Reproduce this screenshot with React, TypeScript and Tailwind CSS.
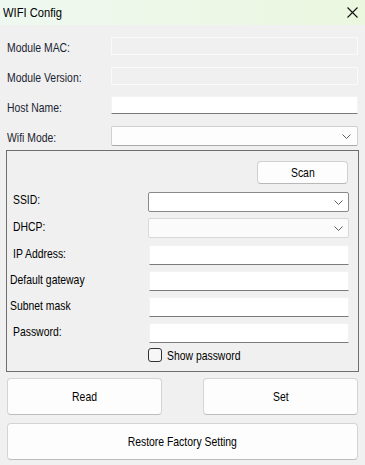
import React from "react";

const T = ({ children, className = "" }: { children: React.ReactNode; className?: string }) => (
  <span className={`block whitespace-nowrap origin-left scale-x-[0.8] text-[13px] leading-[15px] ${className}`}>{children}</span>
);

const C = ({ children }: { children: React.ReactNode }) => (
  <span className="block whitespace-nowrap scale-x-[0.8] text-[13px] leading-[15px] text-black">{children}</span>
);

const Chevron = () => (
  <svg width="9" height="5" viewBox="0 0 9 5" className="block">
    <path d="M0.5 0.5 L4.5 4.5 L8.5 0.5" fill="none" stroke="#606060" strokeWidth="1" />
  </svg>
);

export default function App() {
  return (
    <div className="w-[365px] h-[465px] bg-[#f0f0f0] text-black overflow-hidden" style={{ fontFamily: '"Liberation Sans", Arial, sans-serif' }}>
      {/* Title bar */}
      <div className="h-[25px] flex items-center justify-between pl-[3px] pr-[7px] bg-gradient-to-r from-[#eef8f0] to-[#ebf7df]">
        <span className="block whitespace-nowrap origin-left scale-x-[0.86] text-[13px] leading-[15px]">WIFI Config</span>
        <svg width="11" height="11" viewBox="0 0 11 11" className="block">
          <path d="M0.5 0.5 L10.5 10.5 M10.5 0.5 L0.5 10.5" stroke="#111" strokeWidth="1.1" />
        </svg>
      </div>

      {/* Top section */}
      <div className="pl-[7px] pt-[12px]">
        <div className="flex items-start h-[18px]">
          <div className="flex w-[104px] mt-[3px]"><T className="text-[#1b2430]">Module MAC:</T></div>
          <div className="w-[247px] h-[18px] border border-[#fafafa] bg-[#f0f0f0]" />
        </div>
        <div className="flex items-start h-[18px] mt-[12px]">
          <div className="flex w-[104px] mt-[3px]"><T className="text-[#1b2430]">Module Version:</T></div>
          <div className="w-[247px] h-[18px] border border-[#fafafa] bg-[#f0f0f0]" />
        </div>
        <div className="flex items-start h-[18px] mt-[11px]">
          <div className="flex w-[104px] mt-[4px]"><T className="text-[#1b2430]">Host Name:</T></div>
          <div className="w-[247px] h-[18px] bg-white border border-[#f4f4f4] border-b-[#7a7a7a]" />
        </div>
        <div className="flex items-start h-[20px] mt-[12px]">
          <div className="flex w-[104px] mt-[4px]"><T className="text-[#1b2430]">Wifi Mode:</T></div>
          <div className="w-[247px] h-[20px] bg-[#fdfdfd] border border-[#d0d0d0] border-b-[#a8a8a8] rounded-[2px] flex items-center justify-end pr-[6px]">
            <Chevron />
          </div>
        </div>
      </div>

      {/* Group box */}
      <div className="ml-[6px] mt-[4px] w-[353px] h-[222px] border border-[#6e6e6e]">
        <div className="flex justify-end pr-[10px] pt-[10px]">
          <div className="w-[91px] h-[23px] bg-[#fdfdfd] border border-[#d0d0d0] border-b-[#b8b8b8] rounded-[4px] flex items-center justify-center">
            <C>Scan</C>
          </div>
        </div>
        <div className="flex items-start h-[20px] mt-[8px]">
          <div className="flex w-[141px] pl-[6px]"><T>SSID:</T></div>
          <div className="w-[201px] h-[20px] bg-white border border-[#8a8a8a] rounded-[2px] flex items-center justify-end pr-[5px]">
            <Chevron />
          </div>
        </div>
        <div className="flex items-start h-[20px] mt-[6px]">
          <div className="flex w-[141px] pl-[6px] mt-[1px]"><T>DHCP:</T></div>
          <div className="w-[201px] h-[20px] bg-[#fbfbfb] border border-[#d8d8d8] rounded-[2px] flex items-center justify-end pr-[5px]">
            <Chevron />
          </div>
        </div>
        <div className="flex items-start h-[20px] mt-[7px]">
          <div className="flex w-[141px] pl-[6px] mt-[1px]"><T>IP Address:</T></div>
          <div className="w-[200px] h-[20px] ml-[1px] bg-white border border-[#f2f2f2] border-b-[#7a7a7a]" />
        </div>
        <div className="flex items-start h-[20px] mt-[6px]">
          <div className="flex w-[141px] pl-[3px] mt-[1px]"><T>Default gateway</T></div>
          <div className="w-[200px] h-[20px] ml-[1px] bg-white border border-[#f2f2f2] border-b-[#7a7a7a]" />
        </div>
        <div className="flex items-start h-[20px] mt-[6px]">
          <div className="flex w-[141px] pl-[3px] mt-[1px]"><T>Subnet mask</T></div>
          <div className="w-[200px] h-[20px] ml-[1px] bg-white border border-[#f2f2f2] border-b-[#7a7a7a]" />
        </div>
        <div className="flex items-start h-[20px] mt-[6px]">
          <div className="flex w-[141px] pl-[6px] mt-[1px]"><T>Password:</T></div>
          <div className="w-[200px] h-[20px] ml-[1px] bg-white border border-[#f2f2f2] border-b-[#7a7a7a]" />
        </div>
        <div className="flex items-center h-[14px] mt-[5px] pl-[141px]">
          <div className="w-[14px] h-[14px] rounded-[3px] border border-[#333] bg-[#f7f7f7]" />
          <div className="flex ml-[5px]"><T>Show password</T></div>
        </div>
      </div>

      {/* Buttons */}
      <div className="pl-[7px] mt-[6px]">
        <div className="flex gap-[41px]">
          <div className="w-[155px] h-[37px] bg-[#fdfdfd] border border-[#d4d4d4] border-b-[#bdbdbd] rounded-[4px] flex items-center justify-center">
            <C>Read</C>
          </div>
          <div className="w-[155px] h-[37px] bg-[#fdfdfd] border border-[#d4d4d4] border-b-[#bdbdbd] rounded-[4px] flex items-center justify-center">
            <C>Set</C>
          </div>
        </div>
        <div className="mt-[8px] w-[351px] h-[37px] bg-[#fdfdfd] border border-[#d4d4d4] border-b-[#bdbdbd] rounded-[4px] flex items-center justify-center">
          <C>Restore Factory Setting</C>
        </div>
      </div>
    </div>
  );
}
